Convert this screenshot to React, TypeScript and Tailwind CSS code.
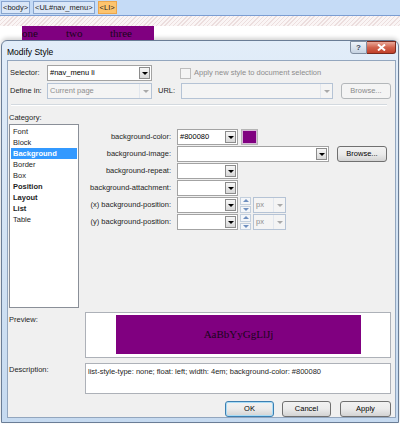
import React from "react";
import clsx from "clsx";

function Tri({ className }: { className: string }) {
  return <div className={clsx("h-0 w-0 border-x-[3px] border-t-[3px] border-x-transparent", className)} />;
}

function Combo({ className, value = "", disabled = false }: { className: string; value?: string; disabled?: boolean }) {
  return (
    <div
      className={clsx(
        "flex h-[16px] shrink-0 items-stretch border",
        disabled ? "border-[#b5c3d5] bg-[#f4f4f4]" : "border-[#a3a3a3] bg-white",
        className
      )}
    >
      <div className={clsx("flex-1 overflow-hidden whitespace-nowrap pl-[2px] leading-[14px]", disabled ? "text-[#8e8e8e]" : "text-black")}>
        {value}
      </div>
      {disabled ? (
        <div className="flex w-[12px] items-center justify-center border-l border-[#e2e7ee]">
          <Tri className="border-t-[#a9a9a9]" />
        </div>
      ) : (
        <div className="m-[1px] flex w-[11px] items-center justify-center border border-[#8c8c8c] bg-linear-to-b from-[#f7f7f7] to-[#d8d8d8]">
          <Tri className="border-t-black" />
        </div>
      )}
    </div>
  );
}

function Btn({ children, className, disabled = false, def = false }: { children: React.ReactNode; className: string; disabled?: boolean; def?: boolean }) {
  return (
    <div
      className={clsx(
        "flex h-[16px] shrink-0 items-center justify-center rounded-[3px] border",
        disabled
          ? "border-[#b3b7ba] bg-[#f4f4f4] text-[#8a8a8a]"
          : def
          ? "border-[#3c7fb1] bg-linear-to-b from-[#f2f2f2] via-[#ebebeb] to-[#d3d3d3] text-black shadow-[inset_0_0_0_1px_#a9dcf6]"
          : "border-[#707070] bg-linear-to-b from-[#f2f2f2] via-[#ebebeb] to-[#d3d3d3] text-black",
        className
      )}
    >
      {children}
    </div>
  );
}

function Spinner() {
  return (
    <div className="ml-[2px] flex h-[16px] w-[11px] shrink-0 flex-col gap-[1px]">
      <div className="flex flex-1 items-center justify-center border border-[#c3cfdd] bg-[#f4f6f9]">
        <div className="h-0 w-0 border-x-[3px] border-b-[3px] border-x-transparent border-b-[#6f8fbf]" />
      </div>
      <div className="flex flex-1 items-center justify-center border border-[#c3cfdd] bg-[#f4f6f9]">
        <div className="h-0 w-0 border-x-[3px] border-t-[3px] border-x-transparent border-t-[#6f8fbf]" />
      </div>
    </div>
  );
}

function Row({ label, children }: { label: string; children: React.ReactNode }) {
  return (
    <div className="flex h-[16px] items-center">
      <div className="w-[93px] shrink-0 whitespace-nowrap pr-[1px] text-right">{label}</div>
      <div className="ml-[5px] flex items-center">{children}</div>
    </div>
  );
}

export default function App() {
  const cats: { name: string; bold?: boolean; sel?: boolean }[] = [
    { name: "Font" },
    { name: "Block" },
    { name: "Background", sel: true },
    { name: "Border" },
    { name: "Box" },
    { name: "Position", bold: true },
    { name: "Layout", bold: true },
    { name: "List", bold: true },
    { name: "Table" },
  ];

  return (
    <div className="h-[424px] w-[400px] overflow-hidden bg-white font-['Liberation_Sans',Arial,sans-serif] text-[7.5px] text-[#1e1e1e]">
      {/* breadcrumb */}
      <div className="flex h-[16px] items-center gap-[3px] border-b border-[#7b9dd2] bg-[#c5dbf6] pl-[1px]">
        <span className="flex h-[13px] items-center border border-[#88a5cf] bg-[#dae7f8] px-[1px]">&lt;body&gt;</span>
        <span className="flex h-[13px] items-center border border-[#88a5cf] bg-[#dae7f8] px-[1px]">&lt;UL#nav_menu&gt;</span>
        <span className="flex h-[13px] items-center border border-[#eba64d] bg-[#fdc46e] px-[1px]">&lt;LI&gt;</span>
      </div>
      {/* hatched strip */}
      <div className="h-[10px] bg-[repeating-linear-gradient(135deg,#ecdede_0px,#ecdede_1px,#faf5f5_1px,#faf5f5_3px)]" />
      {/* nav menu */}
      <div className="flex h-[14px] pl-[22px]">
        <div className="flex bg-[#800080] font-['Liberation_Serif','Times_New_Roman',serif] text-[11px] leading-[14px] text-[#1a051a]">
          <span className="w-[44px]">one</span>
          <span className="w-[44px]">two</span>
          <span className="w-[44px]">three</span>
        </div>
      </div>

      {/* dialog */}
      <div className="ml-[1px] flex h-[383px] w-[398px] flex-col rounded-t-[6px] border border-[#6a7d96] bg-linear-to-b from-[#e2edf9] via-[#d3e3f4] to-[#c6daf0] pb-[4px] pl-[5px] pr-[2px] shadow-[0_-2px_4px_rgba(0,0,0,0.18)]">
        {/* title bar */}
        <div className="flex h-[19px] shrink-0 items-start">
          <div className="mt-[5px] text-[8.5px] text-black">Modify Style</div>
          <div className="ml-auto flex h-[13px]">
            <div className="flex w-[17px] items-center justify-center rounded-bl-[3px] border border-[#7f8da0] bg-linear-to-b from-[#eef3f9] to-[#c6d3e2] text-[8px] font-bold text-[#3a4656]">
              ?
            </div>
            <div className="flex w-[29px] items-center justify-center rounded-br-[3px] border border-l-0 border-[#7a2a1e] bg-linear-to-b from-[#e9a899] via-[#d1624c] to-[#c0402a]">
              <svg width="9" height="7" viewBox="0 0 9 7">
                <path d="M1 0.5 L8 6.5 M8 0.5 L1 6.5" stroke="#ffffff" strokeWidth="2" />
              </svg>
            </div>
          </div>
        </div>

        {/* content */}
        <div className="flex flex-1 flex-col border border-[#93a6be] bg-[#f0f0f0] pl-[1px] pr-[4px]">
          {/* row 1 */}
          <div className="mt-[4px] flex h-[16px] items-center">
            <div className="w-[38px] shrink-0 pl-[1px]">Selector:</div>
            <Combo className="w-[105px]" value="#nav_menu li" />
            <div className="ml-[28px] h-[11px] w-[11px] border border-[#bdbdbd] bg-[#f4f4f4]" />
            <div className="ml-[3px] whitespace-nowrap text-[#8d8d8d]">Apply new style to document selection</div>
          </div>
          {/* row 2 */}
          <div className="mt-[2px] flex h-[16px] items-center">
            <div className="w-[38px] shrink-0 pl-[1px]">Define in:</div>
            <Combo className="w-[105px]" value="Current page" disabled />
            <div className="ml-[6px] w-[23px] shrink-0">URL:</div>
            <Combo className="w-[152px]" disabled />
            <Btn className="ml-[8px] w-[50px]" disabled>
              Browse...
            </Btn>
          </div>
          {/* separator */}
          <div className="ml-[2px] mr-[4px] mt-[5px] h-[2px] border-t border-b border-t-[#d3d9df] border-b-white" />
          {/* category label */}
          <div className="mt-[7px] h-[9px] leading-[9px]">Category:</div>

          {/* main */}
          <div className="mt-[2px] flex">
            <div className="flex h-[184px] w-[70px] shrink-0 flex-col border border-[#8a8f98] bg-white p-[1px]">
              {cats.map((c) => (
                <div
                  key={c.name}
                  className={clsx(
                    "h-[11px] pl-[2px] leading-[11px]",
                    c.sel && "bg-[#3399ff] font-bold text-white",
                    c.bold && "font-bold"
                  )}
                >
                  {c.name}
                </div>
              ))}
            </div>
            <div className="flex flex-col gap-[1px] pt-[5px]">
              <Row label="background-color:">
                <Combo className="w-[61px]" value="#800080" />
                <div className="ml-[3px] h-[16px] w-[17px] border border-[#b5b5b5] bg-[#800080] shadow-[inset_0_0_0_1px_#d7b6d7]" />
              </Row>
              <Row label="background-image:">
                <Combo className="w-[152px]" />
                <Btn className="ml-[8px] w-[50px]">Browse...</Btn>
              </Row>
              <Row label="background-repeat:">
                <Combo className="w-[61px]" />
              </Row>
              <Row label="background-attachment:">
                <Combo className="w-[61px]" />
              </Row>
              <Row label="(x) background-position:">
                <Combo className="w-[61px]" />
                <Spinner />
                <Combo className="ml-[2px] w-[33px]" value="px" disabled />
              </Row>
              <Row label="(y) background-position:">
                <Combo className="w-[61px]" />
                <Spinner />
                <Combo className="ml-[2px] w-[33px]" value="px" disabled />
              </Row>
            </div>
          </div>

          {/* preview */}
          <div className="mt-[4px] flex">
            <div className="w-[76px] shrink-0 pt-[2px]">Preview:</div>
            <div className="h-[46px] w-[306px] border border-[#adb1b8] bg-white pl-[30px] pt-[2px]">
              <div className="flex h-[39px] w-[245px] items-center justify-center bg-[#800080] font-['Liberation_Serif','Times_New_Roman',serif] text-[11px] text-[#1a051a]">
                AaBbYyGgLlJj
              </div>
            </div>
          </div>

          {/* description */}
          <div className="mt-[5px] flex">
            <div className="w-[76px] shrink-0 pt-[1px]">Description:</div>
            <div className="h-[31px] w-[306px] whitespace-nowrap border border-[#adb1b8] bg-white px-[2px] pt-[2px]">
              list-style-type: none; float: left; width: 4em; background-color: #800080
            </div>
          </div>

          {/* buttons */}
          <div className="mt-[7px] flex justify-end">
            <Btn className="w-[49px]" def>
              OK
            </Btn>
            <Btn className="ml-[8px] w-[49px]">Cancel</Btn>
            <Btn className="ml-[9px] w-[51px]">Apply</Btn>
          </div>
        </div>
      </div>
    </div>
  );
}
